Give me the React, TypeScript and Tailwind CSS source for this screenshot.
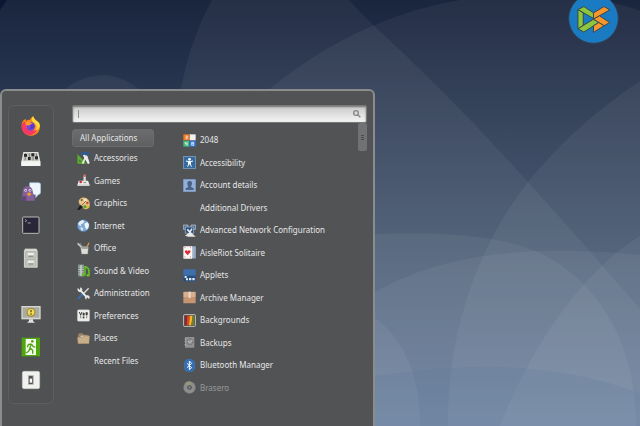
import React, { useState } from 'react';

type IconName = keyof typeof art;

interface MenuEntry {
  label: string;
  icon?: IconName;
  dimmed?: boolean;
}

// Small icons are drawn on a 39 unit grid, launcher icons on a 60 unit grid.
const art = {
  accessories: (
    <>
      <path d="M1 6 L1 35 H29 Z" fill="#5fae35" stroke="#3d7d1d" />
      <path d="M7 22 V29 H14 Z" fill="#3d6b2b" />
      <path d="M14 35 L25 10 L30 8 L38 33 L33 35 L26 20 L20 35 Z" fill="#e4e6e4" />
      <circle cx="18" cy="5" r="4" fill="none" stroke="#275d9e" strokeWidth="4" />
      <circle cx="31" cy="5" r="4" fill="none" stroke="#275d9e" strokeWidth="4" />
      <path d="M20 9 L35 35" stroke="#f1f1f1" strokeWidth="5" />
    </>
  ),
  games: (
    <>
      <path d="M5 20 H33 L37 31 V36 H2 V31 Z" fill="#ededeb" />
      <path d="M2 31 H37 V36 H2 Z" fill="#cfcfcd" />
      <path d="M23 25 V5" stroke="#dededc" strokeWidth="7" />
      <circle cx="23" cy="5" r="4" fill="#c96a6a" />
      <circle cx="11" cy="24" r="4" fill="#d42a2a" />
      <path d="M19 26 H28" stroke="#8d8d8d" strokeWidth="3" />
    </>
  ),
  graphics: (
    <>
      <path d="M15 2 C30 -2 41 12 38 27 C36 40 18 39 18 31 C18 24 8 27 6 19 C3 10 8 4 15 2 Z" fill="#e5c58b" stroke="#99723b" />
      <circle cx="14" cy="9" r="3" fill="#70532d" />
      <circle cx="25" cy="9" r="4" fill="#f3e9ca" />
      <circle cx="31" cy="18" r="4" fill="#d8453c" />
      <circle cx="24" cy="29" r="5" fill="#54a82e" />
      <circle cx="33" cy="29" r="4" fill="#e8ba31" />
      <path d="M27 12 L8 31" stroke="#8b7651" strokeWidth="3" />
      <path d="M10 25 L16 31 L8 38 L0 38 Z" fill="#191919" />
    </>
  ),
  internet: (
    <>
      <circle cx="19" cy="20" r="18" fill="#7da7d3" stroke="#466c98" strokeWidth="2" />
      <path d="M6 9 L15 3 L22 6 L19 13 L12 16 L13 22 L7 19 L3 15 Z" fill="#e6eef4" />
      <path d="M22 14 L31 9 L36 16 L34 27 L29 32 L24 24 Z" fill="#eff4f8" />
      <path d="M10 24 L19 27 L17 36 L12 33 Z" fill="#d9e5ed" />
    </>
  ),
  office: (
    <>
      <path d="M2 4 L18 20" stroke="#c8cac6" strokeWidth="5" />
      <path d="M9 3 L21 20" stroke="#8a8c88" strokeWidth="3" />
      <path d="M36 2 L27 22" stroke="#d99b3c" strokeWidth="4" />
      <path d="M11 16 H34 L32 36 H14 Z" fill="#deded9" stroke="#9d9d98" />
      <ellipse cx="23" cy="17" rx="11" ry="4" fill="#a2a29e" />
    </>
  ),
  video: (
    <>
      <path d="M3 2 H21 V37 H3 Z" fill="#b9c4be" stroke="#56605b" />
      <path d="M6 4 V37 M18 4 V37" stroke="#3f4743" strokeWidth="3" strokeDasharray="4 3" />
      <path d="M24 6 V31 M24 7 C30 11 37 12 36 23 V33" fill="none" stroke="#63bd28" strokeWidth="5" />
      <ellipse cx="20" cy="32" rx="6" ry="4" fill="#63bd28" />
      <ellipse cx="33" cy="34" rx="5" ry="4" fill="#63bd28" />
    </>
  ),
  administration: (
    <>
      <path d="M35 4 L16 23" stroke="#dadbd8" strokeWidth="4" />
      <path d="M16 22 L5 34" stroke="#3a6ba8" strokeWidth="7" strokeLinecap="round" />
      <path d="M9 9 L30 31" stroke="#e8e9e7" strokeWidth="6" />
      <path d="M2 3 L9 9 L10 1 C18 3 18 15 9 15 C3 15 0 9 2 3 Z M36 36 L29 30 L28 38 C20 33 26 24 33 25 C39 27 39 32 36 36 Z" fill="#e8e9e7" />
    </>
  ),
  preferences: (
    <>
      <rect x="1" y="2" width="37" height="35" rx="4" fill="#ecece9" stroke="#b8b8b5" />
      <path d="M11 18 V28 M20 10 V28 M29 10 V28" stroke="#555753" strokeWidth="2" />
      <path d="M7 9 L11 18 L15 9" fill="none" stroke="#3c3d3b" strokeWidth="3" />
      <path d="M17 12 H23 V19 H17 Z M17 23 H22 V28 H17 Z M26 10 H32 V18 H26 Z" fill="#3c3d3b" />
    </>
  ),
  places: (
    <>
      <path d="M3 9 L6 4 H17 L20 8 H35 V18 H3 Z" fill="#9a8260" />
      <path d="M11 13 H29" stroke="#ded6c8" strokeWidth="4" />
      <path d="M1 16 H15 L19 12 H38 L36 35 H3 Z" fill="#c6ae8a" stroke="#927b59" />
    </>
  ),
  tiles: (
    <>
      <path d="M1 1 H19 V19 H1 Z" fill="#f47a20" />
      <path d="M20 1 H38 V19 H20 Z" fill="#f4f1eb" />
      <path d="M1 20 H19 V38 H1 Z" fill="#42bb7f" />
      <path d="M20 20 H38 V38 H20 Z" fill="#347bdc" />
      <path d="M8 6 H13 V10 H9 V14 H14 M7 24 V30 H13 M12 24 V35 M26 25 H32 V34 H26 Z M26 29 H32" fill="none" stroke="#fff" strokeWidth="2" />
    </>
  ),
  accessibility: (
    <>
      <rect x="1" y="1" width="37" height="37" rx="2" fill="#356a9f" stroke="#9dbbd6" strokeWidth="2" />
      <circle cx="19.5" cy="10" r="4" fill="#fff" />
      <path d="M9 15 L17 17 V24 L14 32 M30 15 L22 17 V24 L25 32" fill="none" stroke="#fff" strokeWidth="3" />
      <path d="M16 15 H23 V25 H16 Z" fill="#fff" />
    </>
  ),
  account: (
    <>
      <rect x="1" y="1" width="37" height="37" rx="2" fill="#91afd9" stroke="#7a98c6" strokeWidth="2" />
      <path d="M13 12 C13 4 27 4 27 12 C27 18 25 20 24 24 L32 28 V33 H8 V28 L16 24 C14 19 13 17 13 12 Z" fill="#4c6186" />
    </>
  ),
  network: (
    <>
      <path d="M1 3 H15 V16 H1 Z M24 3 H38 V16 H24 Z" fill="#52779f" stroke="#c7cdd2" strokeWidth="2" />
      <path d="M7 9 H32 V28 H7 Z" fill="#284f83" stroke="#b5c0cc" strokeWidth="2" />
      <path d="M13 16 L22 26 M27 14 L20 25" stroke="#e9e9e9" strokeWidth="5" />
      <path d="M6 35 L22 23 L38 38 H16 Z" fill="#e8e8e5" />
    </>
  ),
  cards: (
    <>
      <rect x="23" y="1" width="15" height="36" fill="#d6dee6" stroke="#5d7b9d" />
      <path d="M30 2 V36 M34 2 V36" stroke="#577ba6" strokeWidth="2" />
      <rect x="1" y="1" width="26" height="37" rx="2" fill="#fbf7f5" />
      <path d="M14 28 L6 19 C4 12 12 11 14 16 C17 11 25 12 22 19 Z" fill="#e22b33" />
      <path d="M4 5 H7 M21 5 H24 M4 33 H7 M21 33 H24" stroke="#e57a7d" strokeWidth="3" />
    </>
  ),
  applets: (
    <>
      <rect x="1" y="1" width="37" height="36" rx="1" fill="#3e6fac" />
      <path d="M1 20 H38 V37 H1 Z" fill="#284c7c" />
      <path d="M5 21 H11 V27 H5 Z M9 28 H15 V34 H9 Z M18 27 H25 V34 H18 Z M28 27 H35 V34 H28 Z" fill="#e5edf5" />
    </>
  ),
  archive: (
    <>
      <rect x="1" y="2" width="37" height="35" rx="2" fill="#c59470" />
      <path d="M2 3 H37 V18 H2 Z" fill="#d7ae8e" />
      <path d="M17 2 H23 V21 H17 Z" fill="#eadacb" />
    </>
  ),
  backgrounds: (
    <>
      <rect x="2" y="2" width="35" height="35" rx="2" fill="#4a4743" stroke="#c8c8c4" strokeWidth="3" />
      <path d="M5 5 H13 L11 34 H5 Z" fill="#7a2d32" />
      <path d="M13 5 H21 L18 34 H11 Z" fill="#ee3e24" />
      <path d="M21 5 H29 L25 34 H18 Z" fill="#f1bd21" />
      <path d="M29 5 H34 V34 H25 Z" fill="#70802f" />
    </>
  ),
  backups: (
    <>
      <rect x="6" y="3" width="28" height="32" rx="2" fill="#919294" />
      <path d="M5 9 H9 M5 17 H9 M5 26 H9" stroke="#b5b5b5" strokeWidth="3" />
      <circle cx="21" cy="17" r="9" fill="none" stroke="#6a6b6d" strokeWidth="2" />
      <path d="M15 15 L20 21 L28 12" fill="none" stroke="#c2c2c2" strokeWidth="3" />
    </>
  ),
  bluetooth: (
    <>
      <rect x="4" y="0" width="31" height="39" rx="15" fill="#316cb7" stroke="#5e90cb" />
      <path d="M12 13 L26 26 L19 32 V6 L26 13 L12 26" fill="none" stroke="#fff" strokeWidth="3" />
    </>
  ),
  disc: (
    <>
      <circle cx="19.5" cy="19.5" r="18" fill="#d4d4d2" stroke="#a2a2a0" />
      <path d="M19 19 L7 6 C12 1 20 1 24 3 Z" fill="#ece6a8" />
      <circle cx="19.5" cy="19.5" r="7" fill="#585858" />
      <circle cx="19.5" cy="19.5" r="3" fill="#ddd" />
    </>
  ),
};

const launchers = [
  {
    label: 'Firefox',
    drawing: (
      <>
        <path d="M2 28 C2 17 8 11 14 9 L16 16 C20 11 24 11 27 12 C28 7 33 3 37 1 C38 8 45 13 50 18 C64 34 54 58 31 59 C14 60 2 47 2 28 Z" fill="#ff8a1c" />
        <path d="M2 27 C6 20 8 17 14 16 C9 39 29 51 49 38 C43 61 13 65 4 43 C2 37 1 32 2 27 Z" fill="#f63962" />
        <path d="M37 1 C27 10 35 17 42 23 C51 32 46 41 40 44 C59 42 62 23 48 15 C42 11 38 7 37 1 Z" fill="#ffdb3c" />
        <circle cx="29" cy="31" r="13" fill="#7843d8" />
        <path d="M14 19 C21 15 29 19 34 23 C27 24 27 27 21 29 C17 27 14 24 14 19 Z" fill="#ff9c27" />
        <path d="M27 29 L38 25 C43 34 34 43 24 37 C31 37 32 34 27 29 Z" fill="#4e3bc6" />
      </>
    ),
  },
  {
    label: 'Mixer',
    drawing: (
      <>
        <path d="M7 9 H52 L58 38 V51 H1 V38 Z" fill="#e3e3df" />
        <path d="M1 37 H58 V51 H1 Z" fill="#f4f4f2" />
        <path d="M10 12 H49 L53 35 H6 Z" fill="#c6c6c1" />
        <path d="M14 13 L12 34 M25 13 V34 M36 13 V34 M46 13 L48 34" stroke="#555" strokeWidth="2" />
        <path d="M9 15 H18 V23 H9 Z M21 24 H29 V33 H21 Z M31 13 H40 V22 H31 Z M42 22 H51 V31 H42 Z" fill="#2b2b2b" />
      </>
    ),
  },
  {
    label: 'Messenger',
    drawing: (
      <>
        <path d="M26 2 H53 Q59 2 59 9 V31 Q59 37 52 38 L44 47 V38 H25 Z" fill="#eef6fc" stroke="#98bce0" strokeWidth="2" />
        <path d="M5 28 C6 8 32 8 35 26 C35 36 43 42 41 56 H3 C-1 48 6 44 5 28 Z" fill="#84619a" />
        <path d="M2 55 C1 43 9 38 17 46 L15 57 H3 Z" fill="#634577" />
        <circle cx="14" cy="25" r="4" fill="#eee6f5" />
        <circle cx="27" cy="25" r="4" fill="#eee6f5" />
        <path d="M13 25 H16 M26 25 H29" stroke="#27172f" strokeWidth="3" />
        <path d="M17 35 L25 31 L32 37 L23 43 Z" fill="#ed9b32" />
      </>
    ),
  },
  {
    label: 'Terminal',
    drawing: (
      <>
        <rect x="5" y="6" width="49" height="49" rx="2" fill="#292638" stroke="#babab6" strokeWidth="3" />
        <path d="M12 13 L17 17 L12 21 M20 24 H29" fill="none" stroke="#d8d8de" strokeWidth="2" />
      </>
    ),
  },
  {
    label: 'Files',
    drawing: (
      <>
        <path d="M12 2 H46 L50 9 V56 Q50 59 47 59 H12 Q9 59 9 56 V9 Z" fill="#dbdbd5" stroke="#a0a09a" />
        <path d="M14 11 H45 V30 H14 Z M14 34 H45 V54 H14 Z" fill="#c8c9c3" stroke="#9fa099" strokeWidth="2" />
        <path d="M21 15 H38 V21 H21 Z M21 38 H38 V44 H21 Z" fill="#efefeb" />
        <path d="M22 25 H37 M22 48 H37" stroke="#83847e" strokeWidth="3" />
      </>
    ),
  },
  {
    label: 'Lock screen',
    drawing: (
      <>
        <path d="M1 6 H59 V46 H1 Z" fill="#d6d6ce" />
        <path d="M5 10 H55 V41 H5 Z" fill="#a9aba2" />
        <path d="M24 46 H36 V51 L42 56 H18 L24 51 Z" fill="#e2e2dc" />
        <circle cx="30" cy="25" r="12" fill="#e8bd25" stroke="#77713c" strokeWidth="2" />
        <circle cx="30" cy="25" r="9" fill="#f5db61" />
        <path d="M30 18 V25 M30 28 V32" stroke="#5a4c19" strokeWidth="4" />
      </>
    ),
  },
  {
    label: 'Log out',
    drawing: (
      <>
        <path d="M2 2 H57 V58 H2 Z" fill="#50a60d" />
        <path d="M14 6 H45 V54 H14 Z" fill="#f4faee" />
        <circle cx="34" cy="13" r="4" fill="#50a60d" />
        <path d="M31 20 L27 33 L35 40 V50 M27 33 L23 43 L15 48 M31 21 L22 23 L19 31 M32 22 L37 29 L43 30" fill="none" stroke="#50a60d" strokeWidth="4" />
      </>
    ),
  },
  {
    label: 'Quit',
    drawing: (
      <>
        <rect x="4" y="4" width="52" height="52" rx="5" fill="#f1f1ef" stroke="#c9c9c6" strokeWidth="2" />
        <path d="M21 16 H38 V44 H21 Z" fill="#a5a5a2" />
        <path d="M24 18 H35 V42 H24 Z" fill="#545452" />
        <path d="M26 26 H33 V38 H26 Z" fill="#fafaf9" />
      </>
    ),
  },
];

const categories: MenuEntry[] = [
  { label: 'Accessories', icon: 'accessories' },
  { label: 'Games', icon: 'games' },
  { label: 'Graphics', icon: 'graphics' },
  { label: 'Internet', icon: 'internet' },
  { label: 'Office', icon: 'office' },
  { label: 'Sound & Video', icon: 'video' },
  { label: 'Administration', icon: 'administration' },
  { label: 'Preferences', icon: 'preferences' },
  { label: 'Places', icon: 'places' },
  { label: 'Recent Files' },
];

const applications: MenuEntry[] = [
  { label: '2048', icon: 'tiles' },
  { label: 'Accessibility', icon: 'accessibility' },
  { label: 'Account details', icon: 'account' },
  { label: 'Additional Drivers' },
  { label: 'Advanced Network Configuration', icon: 'network' },
  { label: 'AisleRiot Solitaire', icon: 'cards' },
  { label: 'Applets', icon: 'applets' },
  { label: 'Archive Manager', icon: 'archive' },
  { label: 'Backgrounds', icon: 'backgrounds' },
  { label: 'Backups', icon: 'backups' },
  { label: 'Bluetooth Manager', icon: 'bluetooth' },
  { label: 'Brasero', icon: 'disc', dimmed: true },
];

function Entry({ label, icon, dimmed }: MenuEntry) {
  return (
    <li className="flex">
      <button className={`flex w-full items-center gap-1 whitespace-nowrap text-left ${dimmed ? 'opacity-45' : ''}`}>
        <svg viewBox="0 0 39 39" className="h-[13px] w-[13px] shrink-0" aria-hidden="true">
          {icon && art[icon]}
        </svg>
        {label}
      </button>
    </li>
  );
}

function Wallpaper() {
  return (
    <svg viewBox="0 0 640 426" preserveAspectRatio="none" className="absolute inset-0 h-full w-full" aria-hidden="true">
      <defs>
        <linearGradient id="sky" x1="0" y1="0" x2="0" y2="1">
          <stop offset="0" stopColor="#1a253e" />
          <stop offset="0.56" stopColor="#40526b" />
          <stop offset="1" stopColor="#587193" />
        </linearGradient>
      </defs>
      <path d="M0 0 H640 V426 H0 Z" fill="url(#sky)" />
      <path d="M0 0 H7 L0 10 Z" fill="#0d1735" />
      <g fill="#fff" fillOpacity="0.05">
        <path d="M64 90 Q82 75 105 75 Q123 76 140 90 Z" />
        <path d="M212 0 Q190 40 181 89 V426 H640 V309 Q585 245 528 182 Q450 95 370 22 L349 0 Z" />
        <path d="M270 89 Q315 51 370 27 Q415 7 460 0 H600 Q622 4 640 11 V426 H270 Z" />
        <path d="M640 81 Q575 124 528 182 Q505 212 492 238 Q447 325 448 426 H640 Z" />
        <path d="M375 234 C440 231 500 236 533 250 C598 277 637 345 636 426 H375 Z" />
        <path d="M375 292 C430 261 505 242 640 255 V426 H375 Z" />
        <path d="M640 236 C583 270 531 346 500 426 H640 Z" />
        <path d="M375 318 C407 342 421 382 420 426 H375 Z" />
      </g>
      <path d="M375 376 C480 361 555 363 640 393 V426 H375 Z" fill="#4b6a96" fillOpacity="0.12" />
    </svg>
  );
}

function DesktopLogo() {
  return (
    <svg viewBox="0 0 154 154" className="absolute -top-[7px] right-[21px] h-[51px] w-[51px]" aria-hidden="true">
      <circle cx="77" cy="77" r="75" fill="#1b7bc2" stroke="#2d4254" strokeWidth="3" />
      <g stroke="#37474c" strokeWidth="3" strokeLinejoin="round">
        <path d="M30 50 L46 60 V98 L30 108 Z" fill="#8cc63f" />
        <path d="M30 50 L48 41 L77 60 V77 Z" fill="#8cc63f" />
        <path d="M30 108 L77 79 L93 89 L48 118 Z" fill="#8cc63f" />
        <path d="M77 60 L109 41 L126 51 L77 79 Z" fill="#f7962d" />
        <path d="M77 79 L95 69 L126 89 L109 99 Z" fill="#f7962d" />
        <path d="M77 99 L93 89 L109 99 L77 119 Z" fill="#f7962d" />
      </g>
    </svg>
  );
}

export default function App() {
  const [query, setQuery] = useState('');

  return (
    <main className="relative flex min-h-screen flex-col justify-end overflow-hidden bg-[#1a253e] font-['Noto_Sans',sans-serif] text-[8px] leading-3 text-[#e6e6e6]">
      <Wallpaper />
      <DesktopLogo />

      <section className="relative flex w-[375px] max-w-full items-start rounded-t-md border-2 border-b-0 border-[#8b8c8d] bg-[#515355] px-[6px] pt-[14px] pb-[22px]">
        {/* Launchers */}
        <nav className="flex w-[46px] shrink-0 flex-col items-center gap-[13px] rounded-md border border-[#5c5e60] bg-[#4f5152] pt-[10px] pb-[13px]">
          {launchers.map((item, i) => (
            <button key={item.label} aria-label={item.label} className={i === 5 ? 'mt-[23px]' : ''}>
              <svg viewBox="0 0 60 60" className="h-5 w-5" aria-hidden="true">{item.drawing}</svg>
            </button>
          ))}
        </nav>

        <div className="ml-[18px] flex min-w-0 flex-1 flex-col">
          <label className="flex h-[18px] items-center rounded-[2px] border border-[#787a78] bg-linear-to-b from-[#c9c9c9] to-[#f4f4f4] px-[5px] inset-shadow-[0_1px_2px_#70726f]">
            <span className="h-2 w-px bg-[#8c8c8c]" />
            <input
              type="text"
              aria-label="Search applications"
              value={query}
              onChange={(e) => setQuery(e.target.value)}
              className="min-w-0 flex-1 bg-transparent text-[#333] outline-none"
            />
            <svg viewBox="0 0 24 24" className="h-2 w-2" fill="none" stroke="#858585" strokeWidth="4" aria-hidden="true">
              <circle cx="9" cy="9" r="7" />
              <path d="M14 14 L22 22" />
            </svg>
          </label>

          <div className="flex items-start">
            {/* Categories */}
            <div className="mt-[6px] w-[82px]">
              <button className="h-[18px] w-full rounded-[3px] border border-[#6a6c6e] bg-linear-to-b from-[#6b6d6f] to-[#5d5f61] px-[7px] text-left">All Applications</button>
              <ul className="grid h-[225px] auto-rows-fr pl-[5px]">
                {categories.map((c) => <Entry key={c.label} {...c} />)}
              </ul>
            </div>

            {/* Applications */}
            <ul className="mt-[6px] ml-[29px] grid h-[270px] min-w-0 flex-1 auto-rows-fr">
              {applications.map((a) => <Entry key={a.label} {...a} />)}
            </ul>
            <div className="flex h-7 w-[9px] flex-col items-center justify-center gap-px rounded-[2px] bg-[#707274]">
              <span className="h-px w-[3px] bg-[#484a4c]" />
              <span className="h-px w-[3px] bg-[#484a4c]" />
              <span className="h-px w-[3px] bg-[#484a4c]" />
            </div>
          </div>
        </div>
      </section>
    </main>
  );
}
